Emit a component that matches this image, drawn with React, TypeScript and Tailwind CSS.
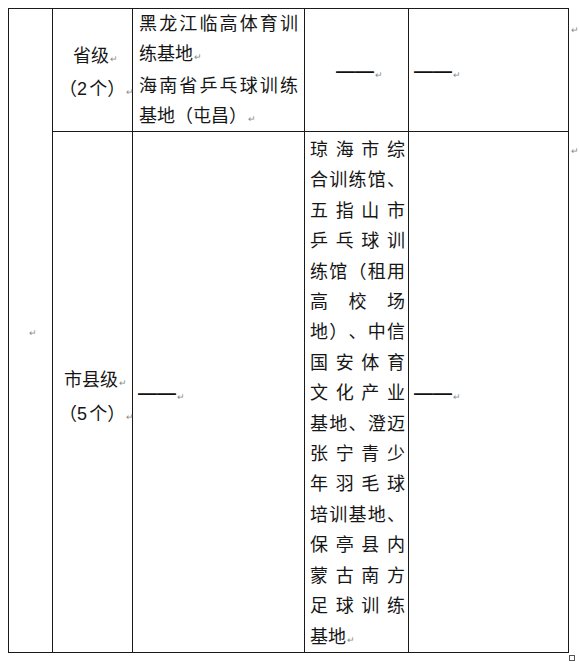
import React from "react";

const Mark = () => (
  <span className="ml-[1px] align-baseline text-[9px] leading-none text-[#8a8a8a]">↵</span>
);

const Dash = () => <span className="relative -top-[1px] text-[19px] font-bold text-[#111]">——</span>;

// explicit Word-style lines: every line but the paragraph's last is justified
const col4Lines = [
  "琼海市综",
  "合训练馆、",
  "五指山市",
  "乒乓球训",
  "练馆（租用",
  "高校场",
  "地）、中信",
  "国安体育",
  "文化产业",
  "基地、澄迈",
  "张宁青少",
  "年羽毛球",
  "培训基地、",
  "保亭县内",
  "蒙古南方",
  "足球训练",
];

const cell = "border border-[#1a1a1a] p-0";

export default function App() {
  return (
    <div
      lang="zh-CN"
      className="min-h-screen bg-white p-2 text-[18px] text-[#161616] [text-spacing-trim:space-all] [text-autospace:normal] font-['Liberation_Sans','Noto_Sans_CJK_SC',sans-serif]"
    >
      <div className="flex items-start">
        <table className="w-[560px] shrink-0 table-fixed border-collapse">
          <colgroup>
            <col className="w-[44px]" />
            <col className="w-[80px]" />
            <col className="w-[172px]" />
            <col className="w-[104px]" />
            <col className="w-[160px]" />
          </colgroup>
          <tbody>
            <tr>
              <td rowSpan={2} className={`${cell} align-middle text-center pl-[4px]`}>
                <Mark />
              </td>
              <td className={`${cell} h-[122px] align-middle text-center whitespace-nowrap pt-[5px] pl-[6px] leading-[30px]`}>
                <p>
                  省级
                  <Mark />
                </p>
                <p className="mt-[3px]">
                  （2个）
                  <Mark />
                </p>
              </td>
              <td className={`${cell} align-top px-[6px] pt-[1px] leading-[29.5px]`}>
                <p className="text-justify [text-align-last:justify]">黑龙江临高体育训</p>
                <p>
                  练基地
                  <Mark />
                </p>
                <p className="mt-[3px] text-justify [text-align-last:justify]">海南省乒乓球训练</p>
                <p>
                  基地（屯昌）
                  <Mark />
                </p>
              </td>
              <td className={`${cell} align-middle text-center pt-[5px] pl-[6px]`}>
                <Dash />
                <Mark />
              </td>
              <td className={`${cell} align-middle pt-[5px] pl-[5px]`}>
                <Dash />
                <Mark />
              </td>
            </tr>
            <tr>
              <td className={`${cell} h-[520px] align-middle text-center whitespace-nowrap pt-[10px] pl-[6px] leading-[30px]`}>
                <p>
                  市县级
                  <Mark />
                </p>
                <p className="mt-[4px]">
                  （5个）
                  <Mark />
                </p>
              </td>
              <td className={`${cell} align-middle pt-[5px] pl-[5px]`}>
                <Dash />
                <Mark />
              </td>
              <td className={`${cell} align-top pl-[5px] pr-[3px] pt-[3px] leading-[30.4px]`}>
                {col4Lines.map((line, i) => (
                  <div key={i} className="text-justify [text-align-last:justify]">
                    {line}
                  </div>
                ))}
                <div>
                  基地
                  <Mark />
                </div>
              </td>
              <td className={`${cell} align-middle pt-[5px] pl-[5px]`}>
                <Dash />
                <Mark />
              </td>
            </tr>
          </tbody>
        </table>

        {/* end-of-row marks beside the table */}
        <div className="flex flex-col pl-[1px]">
          <div className="h-[123px] pt-[5px] leading-[29.5px]">
            <Mark />
          </div>
          <div className="pt-[2px] leading-[30.4px]">
            <Mark />
          </div>
        </div>
      </div>
      <div className="ml-[561px] mt-[2px] h-[6px] w-[6px] border border-[#555]" />
    </div>
  );
}
